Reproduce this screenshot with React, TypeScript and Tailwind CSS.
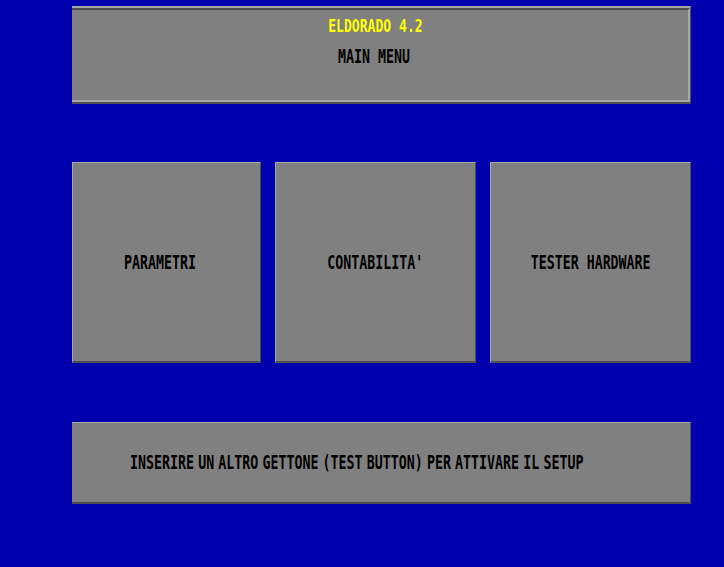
const FONT = "font-['DejaVu_Sans_Mono','Liberation_Mono',monospace] font-bold";

// Pixel-font look: a mono face squeezed sideways to ~8px per character.
function Label({ text, className = "" }: { text: string; className?: string }) {
  return (
    <span
      className={`${FONT} inline-block whitespace-pre text-[19.2px] leading-[20px] text-black [transform:scaleX(0.692)] ${className}`}
    >
      {text}
    </span>
  );
}

function MenuButton({ label, width, shift = "" }: { label: string; width: string; shift?: string }) {
  return (
    <div
      className={`${width} flex h-[201px] items-center justify-center border-t border-l border-r border-b-2 border-t-[#a8a8a8] border-l-[#a8a8a8] border-r-[#505050] border-b-[#505050] bg-[#808080] ${shift}`}
    >
      <Label text={label} />
    </div>
  );
}

export default function App() {
  return (
    <div className="flex h-[567px] w-[724px] flex-col bg-[#0000ae] pl-[72px]">
      {/* header */}
      <div className="mt-[6px] w-[619px] border-t-2 border-r border-b-2 border-t-[#a8a8a8] border-r-[#505050] border-b-[#505050]">
        <div className="flex h-[94px] flex-col items-center border-t-2 border-r-2 border-b-2 border-t-[#505050] border-r-[#a8a8a8] border-b-[#a8a8a8] bg-[#808080] pr-[13px]">
          <span
            className={`${FONT} mt-[6px] ml-[4px] inline-block h-[20px] whitespace-pre text-[17px] leading-[20px] text-[#ffff00] [transform:scaleX(0.77)]`}
          >
            ELDORADO 4.2
          </span>
          <div className="mt-[9px] h-[20px]">
            <Label text="MAIN MENU" />
          </div>
        </div>
      </div>

      {/* main choices */}
      <div className="mt-[58px] flex gap-[14px]">
        <MenuButton label="PARAMETRI" width="w-[189px]" shift="pr-[14px] pt-[1px]" />
        <MenuButton label="CONTABILITA'" width="w-[201px]" shift="pt-[1px]" />
        <MenuButton label="TESTER HARDWARE" width="w-[201px]" shift="pt-[1px]" />
      </div>

      {/* setup hint */}
      <div className="mt-[59px] flex h-[82px] w-[619px] items-center border-t border-r border-b-2 border-t-[#a8a8a8] border-r-[#505050] border-b-[#505050] bg-[#808080] pl-[58px]">
        <Label
          text="INSERIRE UN ALTRO GETTONE (TEST BUTTON) PER ATTIVARE IL SETUP"
          className="origin-left [word-spacing:-5.5px]"
        />
      </div>
    </div>
  );
}
